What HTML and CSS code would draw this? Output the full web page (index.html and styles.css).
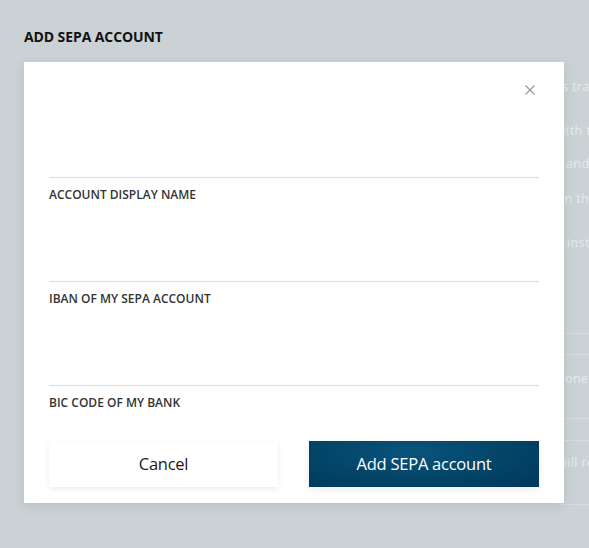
FILE: index.html
```html
<!DOCTYPE html>
<html>
<head>
<meta charset="utf-8">
<link rel="stylesheet" href="styles.css">
</head>
<body>
<div class="page">
  <h1 class="page-title">ADD SEPA ACCOUNT</h1>
  <div class="bg-content">
    <p class="bg-line l1">s tracking</p>
    <p class="bg-line l2">with the</p>
    <p class="bg-line l3">and</p>
    <p class="bg-line l4">in the</p>
    <p class="bg-line l5">instructions</p>
    <div class="bg-rule r1"></div>
    <div class="bg-rule r2"></div>
    <p class="bg-line l6">one</p>
    <div class="bg-rule r3"></div>
    <div class="bg-rule r4"></div>
    <p class="bg-line l7">will re</p>
    <div class="bg-rule r5"></div>
  </div>
</div>

<div class="modal">
  <div class="modal-head">
    <button class="close" aria-label="Close">
      <svg width="10" height="10" viewBox="0 0 10 10"><path d="M0.5 0.5 L9.5 9.5 M9.5 0.5 L0.5 9.5" stroke="#9a9a9a" stroke-width="1.2" fill="none"/></svg>
    </button>
  </div>
  <div class="field"><label>ACCOUNT DISPLAY NAME</label></div>
  <div class="field"><label>IBAN OF MY SEPA ACCOUNT</label></div>
  <div class="field last"><label>BIC CODE OF MY BANK</label></div>
  <div class="actions">
    <button class="btn btn-cancel">Cancel</button>
    <button class="btn btn-primary">Add SEPA account</button>
  </div>
</div>
</body>
</html>
```

FILE: styles.css
```css
* { box-sizing: border-box; }
html, body {
  margin: 0;
  padding: 0;
  height: 100%;
  overflow: hidden;
}
body {
  background: #cbd2d5;
  font-family: "Open Sans", "Liberation Sans", sans-serif;
  color: #222;
}
.page {
  padding: 28px 0 0 24px;
  position: relative;
  height: 100%;
  overflow: hidden;
}
.page-title {
  margin: 0;
  font-size: 14px;
  font-weight: 700;
  color: #111;
  line-height: 18px;
  letter-spacing: -0.1px;
}
.bg-content {
  padding-top: 24px;
  margin-left: -24px;
  overflow: hidden;
}
.bg-line {
  margin: 0;
  font-size: 12.5px;
  line-height: 16px;
  color: #e6eaec;
  white-space: nowrap;
  overflow: hidden;
  letter-spacing: 0.4px;
}
.bg-rule {
  height: 1px;
  background: #d6dcdf;
  margin-left: 560px;
}
.l1 { margin-top: 9px; padding-left: 562px; }
.l2 { margin-top: 28px; padding-left: 556px; }
.l3 { margin-top: 17px; padding-left: 566px; }
.l4 { margin-top: 19px; padding-left: 561px; }
.l5 { margin-top: 28px; padding-left: 567px; }
.r1 { margin-top: 82px; }
.r2 { margin-top: 20px; }
.l6 { margin-top: 16px; padding-left: 565px; }
.r3 { margin-top: 31px; }
.r4 { margin-top: 21px; }
.l7 { margin-top: 14px; padding-left: 557px; }
.r5 { margin-top: 33px; }

.modal {
  position: absolute;
  left: 24px;
  top: 62px;
  width: 540px;
  height: 441px;
  background: #fff;
  box-shadow: 0 3px 10px rgba(40, 60, 70, 0.12);
  padding: 0 25px;
  display: flex;
  flex-direction: column;
}
.modal-head {
  height: 115px;
  display: flex;
  justify-content: flex-end;
  align-items: flex-start;
  padding-top: 23px;
  padding-right: 4px;
}
.close {
  border: 0;
  background: none;
  padding: 0;
  width: 10px;
  height: 10px;
  display: flex;
}
.field {
  border-top: 1px solid #dcdcdc;
  height: 104px;
  padding-top: 9px;
}
.field.last {
  height: 56px;
}
.field label {
  display: block;
  font-size: 12px;
  font-weight: 600;
  color: #333;
  line-height: 16px;
  letter-spacing: 0;
}
.actions {
  display: flex;
  justify-content: space-between;
}
.btn {
  height: 46px;
  border: 0;
  font-family: "Open Sans", "Liberation Sans", sans-serif;
  font-size: 16.5px;
  letter-spacing: -0.25px;
  padding: 0 0 2px;
}
.btn-cancel {
  width: 229px;
  background: #fff;
  color: #1a1a1a;
  box-shadow: 0 2px 6px rgba(0, 0, 0, 0.08);
}
.btn-primary {
  width: 230px;
  color: #fff;
  background: radial-gradient(ellipse at 45% 25%, #09547c 0%, #04476a 45%, #00385a 100%);
  box-shadow: 0 2px 8px rgba(0, 0, 0, 0.08);
}
```
